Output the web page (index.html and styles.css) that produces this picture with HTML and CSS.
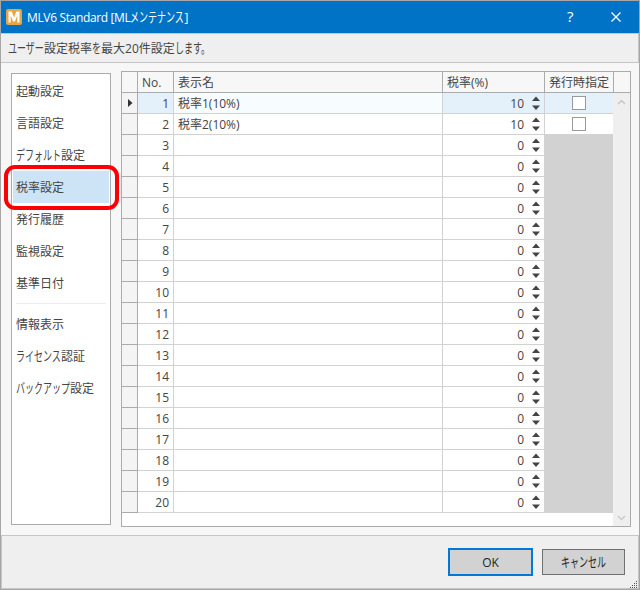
FILE: index.html
```html
<!DOCTYPE html>
<html lang="ja">
<head>
<meta charset="utf-8">
<title>MLV6 Standard</title>
<link rel="stylesheet" href="styles.css">
</head>
<body>
<div class="window">
  <header class="titlebar">
    <svg class="logo" width="16" height="16" viewBox="0 0 16 16"><rect width="16" height="16" rx="2" fill="#e9a445"/><path d="M2.500 13.500V2.500h3.200L8 8.600l2.300-6.100h3.200v11h-2.200V6.500L8.900 12.500H7.100L4.700 6.500v7Z" fill="#fff"/></svg>
    <h1 class="title">MLV6 Standard [ML<span class="kana k6">メンテナンス</span>]</h1>
    <span class="help">?</span>
    <svg class="close" width="10" height="10" viewBox="0 0 10 10"><path d="M.5.5l9 9M9.500.5l-9 9" stroke="#fff" stroke-width="1.300"/></svg>
  </header>
  <div class="description"><span class="kana k4">ユーザー</span>設定税率<span class="kana k1">を</span>最大20件設定<span class="kana k4">します。</span></div>
  <main class="content">
    <nav class="menu">
      <div class="item">起動設定</div>
      <div class="item">言語設定</div>
      <div class="item"><span class="kana k5">デフォルト</span>設定</div>
      <div class="item selected">税率設定<span class="callout"></span></div>
      <div class="item">発行履歴</div>
      <div class="item">監視設定</div>
      <div class="item">基準日付</div>
      <div class="separator"></div>
      <div class="item">情報表示</div>
      <div class="item"><span class="kana k5">ライセンス</span>認証</div>
      <div class="item"><span class="kana k6">バックアップ</span>設定</div>
    </nav>
    <section class="grid">
      <div class="head">
        <div class="cell marker"></div>
        <div class="cell no">No.</div>
        <div class="cell name">表示名</div>
        <div class="cell rate">税率(%)</div>
        <div class="cell issue">発行時指定</div>
      </div>
      <div class="body">
        <div class="rows" id="rows"></div>
        <div class="scrollbar">
          <svg width="9" height="6" viewBox="0 0 9 6"><path d="M1 5l3.500-3.500L8 5" fill="none" stroke="#c9c9c9" stroke-width="1.500"/></svg>
          <svg width="9" height="6" viewBox="0 0 9 6"><path d="M1 1l3.500 3.500L8 1" fill="none" stroke="#c9c9c9" stroke-width="1.500"/></svg>
        </div>
      </div>
    </section>
  </main>
  <footer class="footer">
    <button class="button primary">OK</button>
    <button class="button"><span class="kana k5">キャンセル</span></button>
    <svg class="grip" width="8" height="8" viewBox="0 0 8 8"><path d="M6 0h1v1H6zM4 2h1v1H4zM6 2h1v1H6zM2 4h1v1H2zM4 4h1v1H4zM6 4h1v1H6zM0 6h1v1H0zM2 6h1v1H2zM4 6h1v1H4zM6 6h1v1H6z" fill="#555"/></svg>
  </footer>
</div>
<script src="script.js"></script>
</body>
</html>
```
FILE: styles.css
```css
* { box-sizing: border-box; }
body {
  margin: 0;
  font: 12px/16px "Open Sans", "Noto Sans CJK JP", sans-serif;
  color: #444;
}
.window {
  width: 640px;
  height: 590px;
  border: 1px solid #a6a6a6;
  background: #f7f7f7;
  display: flex;
  flex-direction: column;
  overflow: hidden;
}
/* Kana are condensed to 9px per character, slightly taller than the kanji. */
.kana {
  display: inline-block;
  height: 16px;
  line-height: 15px;
  vertical-align: top;
  font-size: 13.5px;
  letter-spacing: 0;
  white-space: nowrap;
  transform: scaleX(.6667);
  transform-origin: 0 50%;
}
.k1 { width: 9px; }
.k4 { width: 36px; }
.k5 { width: 45px; }
.k6 { width: 54px; }

.titlebar {
  height: 32px;
  flex: none;
  display: flex;
  align-items: center;
  padding-left: 5px;
  background: #0173c7;
  color: #fff;
}
.logo { flex: none; }
.title {
  margin: 2px 0 0 5px;
  font-size: 12px;
  font-weight: 400;
  letter-spacing: -.35px;
  flex: 1;
  white-space: nowrap;
}
.help { font-size: 15px; width: 8px; margin: 0 36px 2px 0; }
.close { margin-right: 18px; }

.description {
  height: 30px;
  flex: none;
  padding: 7px 0 0 7px;
  border: 1px solid #c6c6c6;
  border-left: 0;
  background: #efefef;
  white-space: nowrap;
}
.content {
  flex: none;
  height: 472px;
  display: flex;
  align-items: flex-start;
  gap: 10px;
  padding: 8px 8px 0 10px;
}
.menu {
  width: 100px;
  height: 452px;
  margin-top: 2px;
  padding: 1px;
  border: 1px solid #ababab;
  background: #fff;
}
.item {
  height: 32px;
  padding: 9px 0 0 3px;
  white-space: nowrap;
}
.selected { position: relative; background: #cce4f6; }
.callout {
  position: absolute;
  left: -9px;
  top: -6px;
  width: 115px;
  height: 45px;
  border: 4px solid #fa0006;
  border-radius: 11px;
}
.separator { height: 1px; margin: 4px 3px; background: #ededed; }

.grid {
  width: 510px;
  height: 456px;
  border: 1px solid #ababab;
  background: #fff;
}
.head, .row { display: flex; height: 21px; }
.head { background: #f7f7f7; border-bottom: 1px solid #ababab; }
.cell {
  flex: none;
  border-right: 1px solid #d2d2d2;
  padding: 3px 4px 0;
  white-space: nowrap;
}
.row .cell { border-bottom: 1px solid #d2d2d2; }
.head .cell { border-right-color: #ababab; }
.marker { width: 16px; }
.no { width: 36px; }
.name { width: 269px; }
.rate { width: 102px; }
.issue { width: 69px; }
.body { display: flex; height: 433px; }
.rows { width: 491px; flex: none; }
.row .marker {
  background: #f4f4f4;
  border-color: #ababab;
  padding: 6px 0 0 6px;
}
.arrow { display: block; }
.row .no { text-align: right; }
.row .rate {
  display: flex;
  justify-content: flex-end;
  padding: 3px 4px 0 0;
}
.spinner { margin: 0 0 0 8px; }
.row .issue {
  width: 68px;
  border-right: 0;
  background: #d2d2d2;
  padding: 3px 0 0 27px;
}
.checkable .issue { background: #fff; }
.checkbox {
  width: 14px;
  height: 14px;
  border: 1px solid #999;
  background: #fff;
}
.current .no, .current .rate, .current .issue { background: #e4f1fa; }
.current .name { background: #f7fcff; }
.scrollbar {
  width: 17px;
  background: #efefef;
  display: flex;
  flex-direction: column;
  align-items: center;
  justify-content: space-between;
  padding: 6px 0 5px;
}
.footer {
  position: relative;
  flex: 1;
  display: flex;
  justify-content: flex-end;
  align-items: flex-start;
  gap: 9px;
  padding: 12px 13px 0 0;
  border: 1px solid #c6c6c6;
  background: #efefef;
}
.button {
  width: 83px;
  height: 26px;
  margin-top: 1px;
  padding: 1px 0 0;
  border: 1px solid #707070;
  background: #d2d2d2;
  color: #222;
  font: inherit;
}
.button .kana { text-align: left; }
.primary {
  width: 85px;
  height: 28px;
  margin-top: 0;
  border: 2px solid #0078d7;
}
.grip { position: absolute; right: 0; bottom: -1px; }
```
FILE: script.js
```js
const items = [
  { name: "税率1(10%)", rate: 10 },
  { name: "税率2(10%)", rate: 10 }
];
const arrow = '<svg class="arrow" width="5" height="8" viewBox="0 0 5 8"><path d="M0 0l4.500 4L0 8z" fill="#333"/></svg>';
const spinner = '<svg class="spinner" width="8" height="14" viewBox="0 0 8 14"><path d="M0 5L4 .5l4 4.500zM0 9.500h8l-4 4.500z" fill="#444"/></svg>';
let html = "";
for (let i = 0; i < 20; i++) {
  const item = items[i];
  const state = (i === 0 ? " current" : "") + (item ? " checkable" : "");
  html += `<div class="row${state}">
    <div class="cell marker">${i === 0 ? arrow : ""}</div>
    <div class="cell no">${i + 1}</div>
    <div class="cell name">${item ? item.name : ""}</div>
    <div class="cell rate">${item ? item.rate : 0}${spinner}</div>
    <div class="cell issue">${item ? '<div class="checkbox"></div>' : ""}</div>
  </div>`;
}
document.getElementById("rows").innerHTML = html;
```
